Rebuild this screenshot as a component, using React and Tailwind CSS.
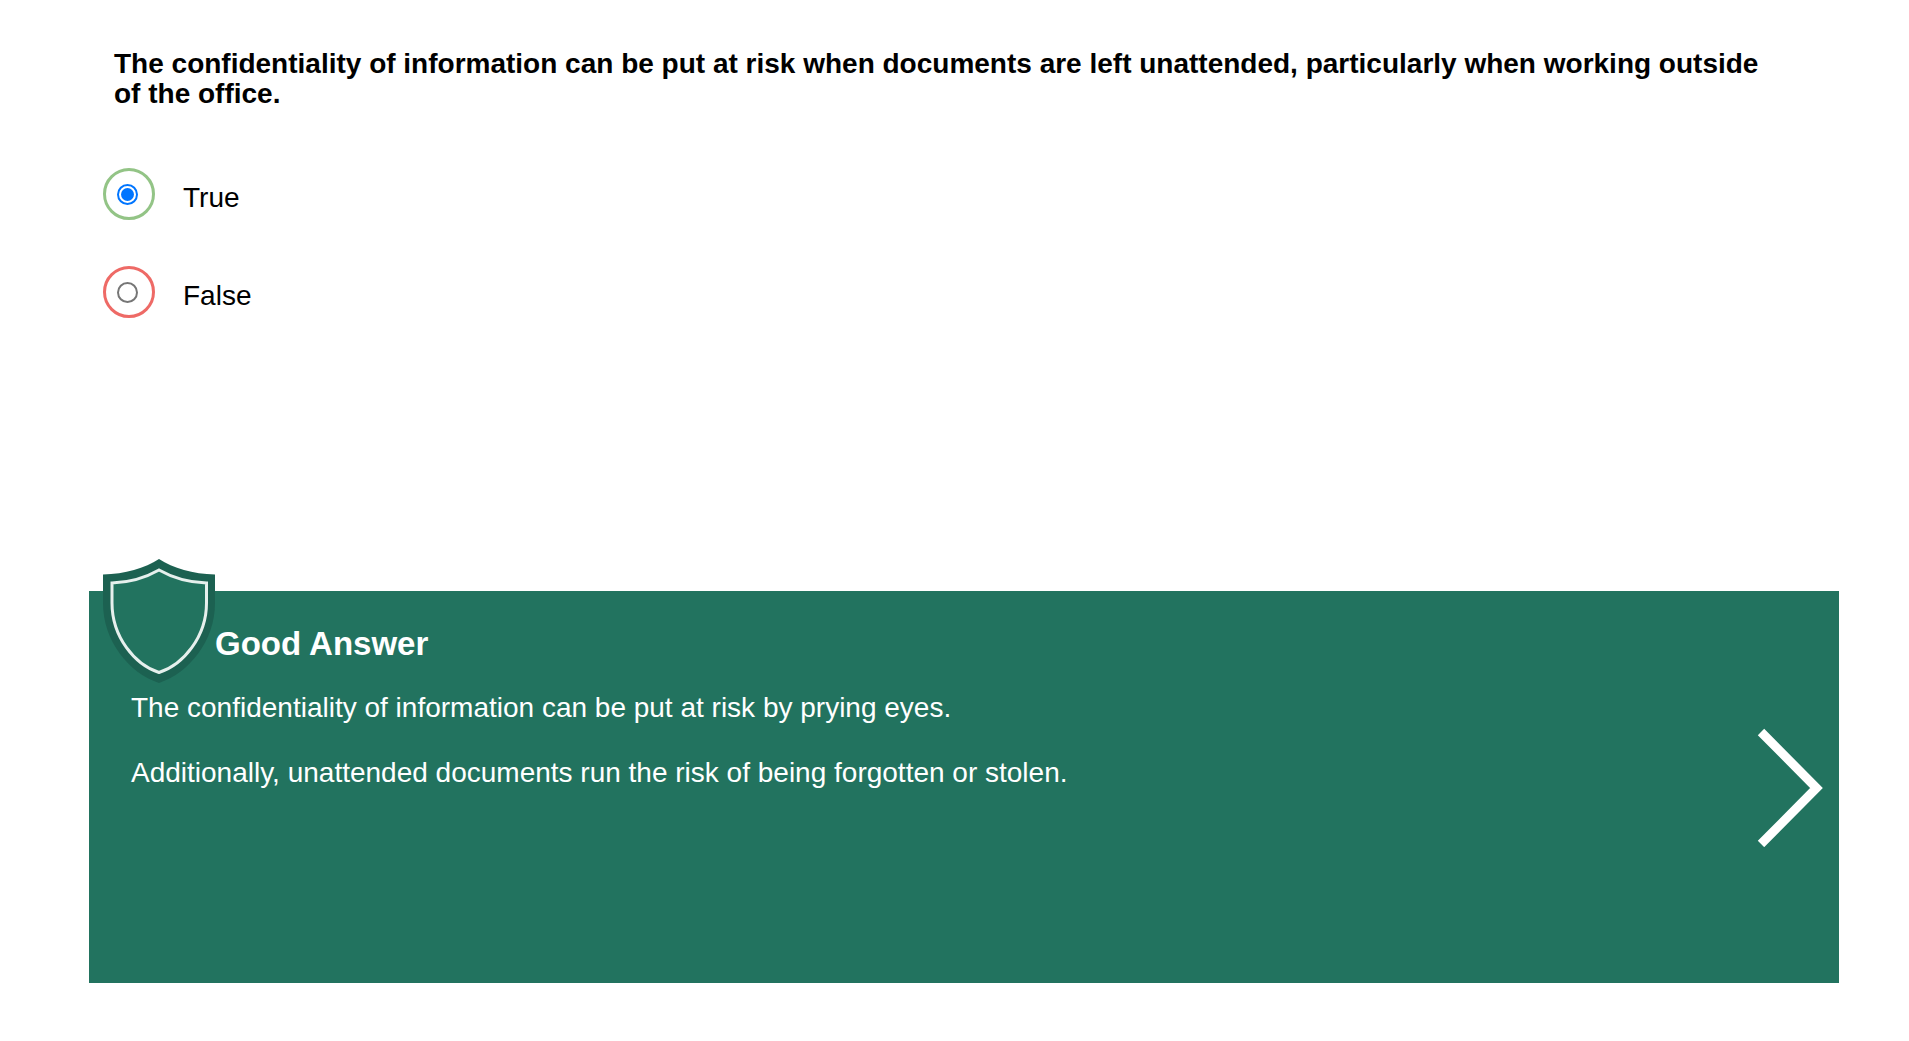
import { useState } from "react";

const answers = [
  { id: "true", label: "True", ring: "border-[#93c486]" },
  { id: "false", label: "False", ring: "border-[#ee6a66]" },
];

function Shield() {
  return (
    <svg className="w-28 shrink-0" viewBox="0 0 112 124" fill="none" aria-hidden="true">
      <path
        d="M56 0C70 9 90 15 112 15.500V44C112 82 86 114 56 124C26 114 0 82 0 44V15.500C22 15 42 9 56 0Z"
        fill="#1c6151"
      />
      <path
        d="M56 11C70 19 86 23.500 103.500 24V44C103.500 78 80 106 56 113.500C32 106 9 78 9 44V24C26 23.500 42 19 56 11Z"
        fill="#22735f"
        stroke="#e6f0ed"
        strokeWidth="3"
      />
    </svg>
  );
}

export default function App() {
  const [selected, setSelected] = useState("true");

  return (
    <main className="min-h-screen bg-white pl-[89px] pr-[70px] font-['Liberation_Sans',Arial,sans-serif] text-[28px] leading-[30px] text-black">
      <fieldset className="min-h-[559px] min-w-0 pl-[14px] pr-[73px]">
        <legend className="pl-[11px] pt-[49px] font-bold">
          The confidentiality of information can be put at risk when documents are left unattended, particularly when
          working outside of the office.
        </legend>
        <div className="mt-[59px] flex flex-col items-start gap-[46px]">
          {answers.map((answer) => (
            <label key={answer.id} className="flex items-center gap-7">
              <span className={`flex size-[52px] items-center rounded-full border-3 pl-[11px] ${answer.ring}`}>
                <input
                  type="radio"
                  name="answer"
                  className="size-[21px] appearance-none rounded-full border-2 border-[#767676] bg-white p-[2px] bg-clip-content checked:border-[#0075ff] checked:bg-[#0075ff]"
                  checked={selected === answer.id}
                  onChange={() => setSelected(answer.id)}
                />
              </span>
              <span className="pt-2">{answer.label}</span>
            </label>
          ))}
        </div>
      </fieldset>

      <section className="pt-8">
        <div className="flex min-h-[392px] items-center justify-between bg-[#22735f] pl-[42px] pr-4 text-white">
          <div className="self-stretch">
            <div className="-ml-7 -mt-8 flex items-end">
              <Shield />
              <h2 className="pb-[21px] text-[33px] leading-[36px] font-bold">Good Answer</h2>
            </div>
            <p className="mt-[10px]">The confidentiality of information can be put at risk by prying eyes.</p>
            <p className="mt-[35px]">Additionally, unattended documents run the risk of being forgotten or stolen.</p>
          </div>
          <button type="button" aria-label="Next">
            <svg className="w-[66px]" viewBox="0 0 66 120" fill="none" aria-hidden="true">
              <path d="M4 5L59.500 61L4 117" stroke="white" strokeWidth="9" />
            </svg>
          </button>
        </div>
      </section>
    </main>
  );
}
